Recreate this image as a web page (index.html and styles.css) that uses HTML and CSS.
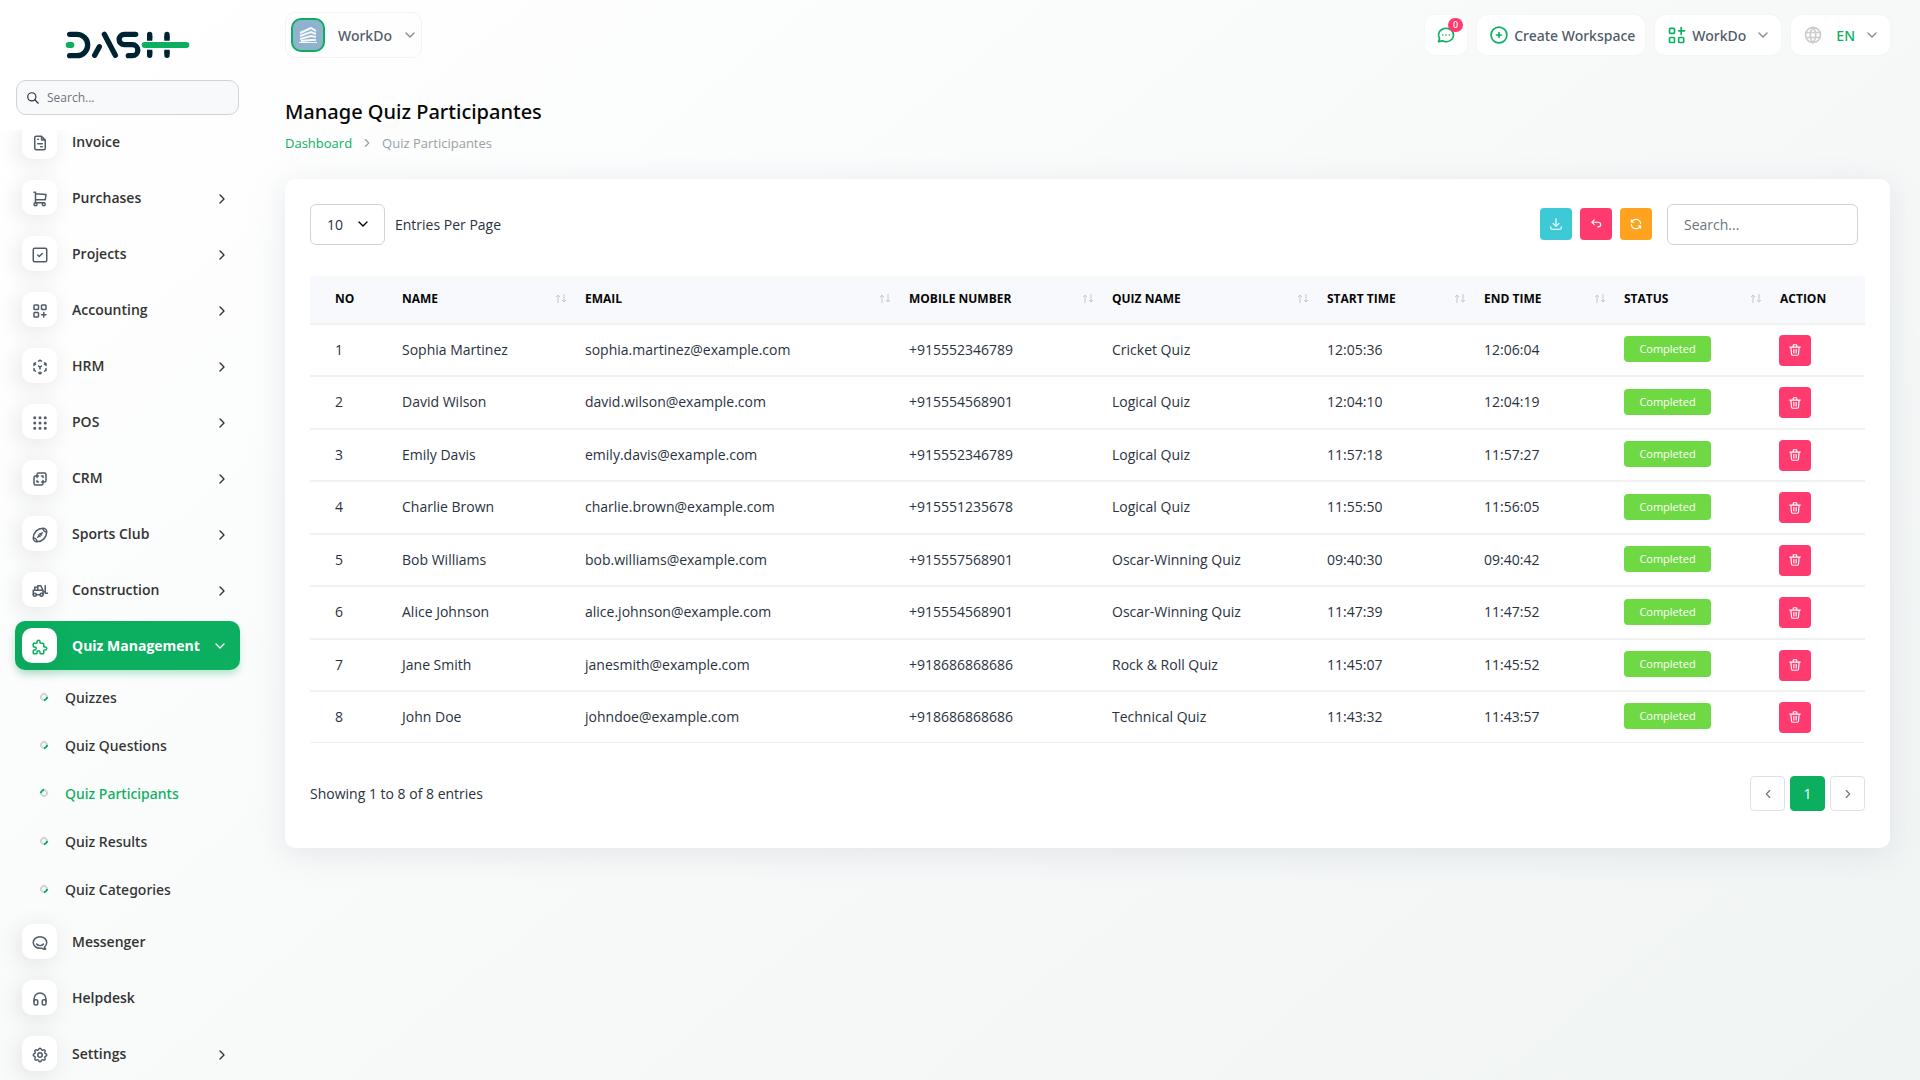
FILE: index.html
```html
<!DOCTYPE html>
<html lang="en">
<head>
    <meta charset="UTF-8">
    <meta name="viewport" content="width=device-width, initial-scale=1.0">
    <title>Manage Quiz Participantes</title>
    <link rel="stylesheet" href="styles.css">
</head>
<body>
    <!-- Icon set -->
    <svg class="sprite" aria-hidden="true">
        <symbol id="i-search" viewBox="0 0 24 24"><circle cx="10" cy="10" r="7"/><path d="M21 21l-6-6"/></symbol>
        <symbol id="i-right" viewBox="0 0 24 24"><path d="M9 6l6 6-6 6"/></symbol>
        <symbol id="i-left" viewBox="0 0 24 24"><path d="M15 6l-6 6 6 6"/></symbol>
        <symbol id="i-down" viewBox="0 0 24 24"><path d="M6 9l6 6 6-6"/></symbol>
        <symbol id="i-invoice" viewBox="0 0 24 24"><path d="M14 3v4a1 1 0 0 0 1 1h4M17 21H7a2 2 0 0 1-2-2V5a2 2 0 0 1 2-2h7l5 5v11a2 2 0 0 1-2 2zM9 7h1M9 13h6M13 17h2"/></symbol>
        <symbol id="i-cart" viewBox="0 0 24 24"><circle cx="6" cy="19" r="2"/><circle cx="17" cy="19" r="2"/><path d="M17 17H6V3H4M6 5l14 1-1 7H6"/></symbol>
        <symbol id="i-check" viewBox="0 0 24 24"><rect x="3" y="3" width="18" height="18" rx="2"/><path d="M9 12l2 2 4-4"/></symbol>
        <symbol id="i-grid-add" viewBox="0 0 24 24"><rect x="4" y="4" width="6" height="6" rx="1"/><rect x="14" y="4" width="6" height="6" rx="1"/><rect x="4" y="14" width="6" height="6" rx="1"/><path d="M14 17h6M17 14v6"/></symbol>
        <symbol id="i-cube" viewBox="0 0 24 24"><path d="M6 17.600l-2-1.100V14M4 10V7.500l2-1.100M10 4.100L12 3l2 1.100M18 6.400l2 1.100V10M20 14v2.500l-2 1.120M14 19.900L12 21l-2-1.100M12 12l2-1.100M18 8.600l2-1.100M12 12v2.500M12 18.500V21M12 12l-2-1.120M6 8.600L4 7.500"/></symbol>
        <symbol id="i-dots" viewBox="0 0 24 24"><circle cx="5" cy="5" r="1"/><circle cx="12" cy="5" r="1"/><circle cx="19" cy="5" r="1"/><circle cx="5" cy="12" r="1"/><circle cx="12" cy="12" r="1"/><circle cx="19" cy="12" r="1"/><circle cx="5" cy="19" r="1"/><circle cx="12" cy="19" r="1"/><circle cx="19" cy="19" r="1"/></symbol>
        <symbol id="i-layers" viewBox="0 0 24 24"><path d="M16 16v2a2 2 0 0 1-2 2H6a2 2 0 0 1-2-2v-8a2 2 0 0 1 2-2h2V6a2 2 0 0 1 2-2h8a2 2 0 0 1 2 2v8a2 2 0 0 1-2 2h-2M10 8H8v2M8 14v2h2M14 8h2v2M16 14v2h-2"/></symbol>
        <symbol id="i-ball" viewBox="0 0 24 24"><path d="M15 9l-6 6M10 12l2 2M12 10l2 2M8 21a5 5 0 0 0-5-5M16 3C8.820 3 3 8.820 3 16a5 5 0 0 0 5 5c7.180 0 13-5.820 13-13a5 5 0 0 0-5-5M16 3a5 5 0 0 0 5 5"/></symbol>
        <symbol id="i-forklift" viewBox="0 0 24 24"><circle cx="5" cy="17" r="2"/><circle cx="14" cy="17" r="2"/><path d="M7 17h5M3 17v-6h13v6M5 11V7h4M9 11V5h4l3 6M22 15h-3V5M16 13h3"/></symbol>
        <symbol id="i-puzzle" viewBox="0 0 24 24"><path d="M4 7h3a1 1 0 0 0 1-1V5a2 2 0 0 1 4 0v1a1 1 0 0 0 1 1h3a1 1 0 0 1 1 1v3a1 1 0 0 0 1 1h1a2 2 0 0 1 0 4h-1a1 1 0 0 0-1 1v3a1 1 0 0 1-1 1h-3a1 1 0 0 1-1-1v-1a2 2 0 0 0-4 0v1a1 1 0 0 1-1 1H4a1 1 0 0 1-1-1v-3a1 1 0 0 1 1-1h1a2 2 0 0 0 0-4H4a1 1 0 0 1-1-1V8a1 1 0 0 1 1-1"/></symbol>
        <symbol id="i-messenger" viewBox="0 0 24 24"><path d="M17.802 17.292s.077-.055.200-.149c1.843-1.425 3-3.490 3-5.789 0-4.286-4.030-7.764-9-7.764s-9 3.478-9 7.764C3.002 15.642 7.032 19 12.002 19c.424 0 1.120-.028 2.088-.084 1.262.820 3.104 1.493 4.716 1.493.499 0 .734-.410.414-.828-.486-.596-1.156-1.551-1.416-2.290zM7.500 13.500c2.500 2.500 6.500 2.500 9 0"/></symbol>
        <symbol id="i-headphones" viewBox="0 0 24 24"><rect x="4" y="13" width="5" height="7" rx="2"/><rect x="15" y="13" width="5" height="7" rx="2"/><path d="M4 15v-3a8 8 0 0 1 16 0v3"/></symbol>
        <symbol id="i-settings" viewBox="0 0 24 24"><path d="M10.325 4.317c.426-1.756 2.924-1.756 3.350 0a1.724 1.724 0 0 0 2.573 1.066c1.543-.940 3.310.826 2.370 2.370a1.724 1.724 0 0 0 1.065 2.572c1.756.426 1.756 2.924 0 3.350a1.724 1.724 0 0 0-1.066 2.573c.940 1.543-.826 3.310-2.370 2.370a1.724 1.724 0 0 0-2.572 1.065c-.426 1.756-2.924 1.756-3.350 0a1.724 1.724 0 0 0-2.573-1.066c-1.543.940-3.310-.826-2.370-2.370a1.724 1.724 0 0 0-1.065-2.572c-1.756-.426-1.756-2.924 0-3.350a1.724 1.724 0 0 0 1.066-2.573c-.940-1.543.826-3.310 2.370-2.370 1 .608 2.296.070 2.572-1.065z"/><circle cx="12" cy="12" r="3"/></symbol>
        <symbol id="i-message" viewBox="0 0 24 24"><path d="M3 20l1.300-3.900C1.976 12.663 2.874 8.228 6.400 5.726c3.526-2.501 8.590-2.296 11.845.480 3.255 2.777 3.695 7.266 1.029 10.501C16.608 19.942 11.659 20.922 7.700 19L3 20M8 12h.010M12 12h.010M16 12h.010"/></symbol>
        <symbol id="i-plus" viewBox="0 0 24 24"><circle cx="12" cy="12" r="9.500"/><path d="M9 12h6M12 9v6"/></symbol>
        <symbol id="i-apps" viewBox="0 0 24 24"><rect x="3" y="4" width="6" height="6" rx="1"/><rect x="3" y="15" width="6" height="6" rx="1"/><rect x="14" y="15" width="6" height="6" rx="1"/><path d="M14 7h7M17 3v8"/></symbol>
        <symbol id="i-world" viewBox="0 0 24 24"><circle cx="12" cy="12" r="9"/><path d="M3.600 9h16.800M3.600 15h16.800M11.500 3a17 17 0 0 0 0 18M12.500 3a17 17 0 0 1 0 18"/></symbol>
        <symbol id="i-download" viewBox="0 0 24 24"><path d="M3 17v2a2 2 0 0 0 2 2h14a2 2 0 0 0 2-2v-2M7 11l5 5 5-5M12 3v13"/></symbol>
        <symbol id="i-back" viewBox="0 0 24 24"><path d="M9 13L5 9l4-4M5 9h11a4 4 0 0 1 0 8h-1"/></symbol>
        <symbol id="i-refresh" viewBox="0 0 24 24"><path d="M20 11A8.100 8.100 0 0 0 4.500 9M4 5v4h4M4 13a8.100 8.100 0 0 0 15.500 2M20 19v-4h-4"/></symbol>
        <symbol id="i-trash" viewBox="0 0 24 24"><path d="M3 7h18M10 11v6M14 11v6M5 7l1 12a2 2 0 0 0 2 2h8a2 2 0 0 0 2-2l1-12M9 7V4a1 1 0 0 1 1-1h4a1 1 0 0 1 1 1v3"/></symbol>
        <symbol id="i-sort" viewBox="0 0 10 9"><path d="M2 9V1M0 3l2-2 2 2M8 0v8M6 6l2 2 2-2"/></symbol>
    </svg>

    <div class="layout">
        <aside class="sidebar">
            <a class="logo" href="#" aria-label="Dash">
                <svg viewBox="195 93 375 84" width="125" height="28">
                    <g class="logo-dark">
                        <path d="M209 103h22a32 32 0 0 1 0 64h-22M298 140l-14 26M313 103l33 63M407 103h-34a15 15 0 0 0 0 31h24a16 16 0 0 1 0 33h-12"/>
                        <path d="M449 103v9M449 158v8M501 103v9M501 158v8"/>
                        <path class="flat" d="M449 108v14M449 149v12M501 108v14M501 149v12"/>
                    </g>
                    <g class="logo-green">
                        <rect x="197" y="126" width="26" height="18" rx="9"/>
                        <rect x="425" y="126" width="143" height="18" rx="9"/>
                    </g>
                </svg>
            </a>
            <label class="side-search">
                <svg class="icon"><use href="#i-search"/></svg>
                <input type="search" placeholder="Search..." aria-label="Search menu">
            </label>
            <nav class="menu">
                <ul class="menu-list">
                    <li><a class="item" href="#"><span class="item-icon"><svg class="icon"><use href="#i-invoice"/></svg></span>Invoice</a></li>
                    <li><a class="item" href="#"><span class="item-icon"><svg class="icon"><use href="#i-cart"/></svg></span>Purchases<svg class="icon arrow"><use href="#i-right"/></svg></a></li>
                    <li><a class="item" href="#"><span class="item-icon"><svg class="icon"><use href="#i-check"/></svg></span>Projects<svg class="icon arrow"><use href="#i-right"/></svg></a></li>
                    <li><a class="item" href="#"><span class="item-icon"><svg class="icon"><use href="#i-grid-add"/></svg></span>Accounting<svg class="icon arrow"><use href="#i-right"/></svg></a></li>
                    <li><a class="item" href="#"><span class="item-icon"><svg class="icon"><use href="#i-cube"/></svg></span>HRM<svg class="icon arrow"><use href="#i-right"/></svg></a></li>
                    <li><a class="item" href="#"><span class="item-icon"><svg class="icon"><use href="#i-dots"/></svg></span>POS<svg class="icon arrow"><use href="#i-right"/></svg></a></li>
                    <li><a class="item" href="#"><span class="item-icon"><svg class="icon"><use href="#i-layers"/></svg></span>CRM<svg class="icon arrow"><use href="#i-right"/></svg></a></li>
                    <li><a class="item" href="#"><span class="item-icon"><svg class="icon"><use href="#i-ball"/></svg></span>Sports Club<svg class="icon arrow"><use href="#i-right"/></svg></a></li>
                    <li><a class="item" href="#"><span class="item-icon"><svg class="icon"><use href="#i-forklift"/></svg></span>Construction<svg class="icon arrow"><use href="#i-right"/></svg></a></li>
                    <li>
                        <a class="item active" href="#"><span class="item-icon"><svg class="icon"><use href="#i-puzzle"/></svg></span>Quiz Management<svg class="icon arrow"><use href="#i-down"/></svg></a>
                        <ul class="submenu">
                            <li><a href="#">Quizzes</a></li>
                            <li><a href="#">Quiz Questions</a></li>
                            <li><a class="current" href="#">Quiz Participants</a></li>
                            <li><a href="#">Quiz Results</a></li>
                            <li><a href="#">Quiz Categories</a></li>
                        </ul>
                    </li>
                    <li><a class="item" href="#"><span class="item-icon"><svg class="icon"><use href="#i-messenger"/></svg></span>Messenger</a></li>
                    <li><a class="item" href="#"><span class="item-icon"><svg class="icon"><use href="#i-headphones"/></svg></span>Helpdesk</a></li>
                    <li><a class="item" href="#"><span class="item-icon"><svg class="icon"><use href="#i-settings"/></svg></span>Settings<svg class="icon arrow"><use href="#i-right"/></svg></a></li>
                </ul>
            </nav>
        </aside>

        <div class="content">
            <header class="topbar">
                <button type="button" class="workspace">
                    <span class="avatar">
                        <svg viewBox="0 0 18 16" width="18" height="16">
                            <path d="M1 6l11-5 5 3M1 9l11-4 5 2M1 12l11-3 5 1M2 14l10-1h5M0 16h18"/>
                        </svg>
                    </span>
                    WorkDo
                    <svg class="icon caret"><use href="#i-down"/></svg>
                </button>
                <div class="top-actions">
                    <button type="button" class="top-btn messages" aria-label="Messages"><svg class="icon"><use href="#i-message"/></svg><span class="count">0</span></button>
                    <button type="button" class="top-btn"><svg class="icon"><use href="#i-plus"/></svg>Create Workspace</button>
                    <button type="button" class="top-btn"><svg class="icon"><use href="#i-apps"/></svg>WorkDo<svg class="icon caret"><use href="#i-down"/></svg></button>
                    <button type="button" class="top-btn lang"><svg class="icon"><use href="#i-world"/></svg><span>EN</span><svg class="icon caret"><use href="#i-down"/></svg></button>
                </div>
            </header>

            <main>
                <h1>Manage Quiz Participantes</h1>
                <nav class="breadcrumb" aria-label="Breadcrumb">
                    <a href="#">Dashboard</a>
                    <svg class="icon"><use href="#i-right"/></svg>
                    <span>Quiz Participantes</span>
                </nav>

                <section class="card">
                    <div class="toolbar">
                        <div class="per-page">
                            <div class="select-wrap">
                                <select id="perPage">
                                    <option>10</option>
                                    <option>25</option>
                                    <option>50</option>
                                </select>
                                <svg class="icon"><use href="#i-down"/></svg>
                            </div>
                            <label for="perPage">Entries Per Page</label>
                        </div>
                        <div class="tools">
                            <button type="button" class="btn info" aria-label="Export"><svg class="icon"><use href="#i-download"/></svg></button>
                            <button type="button" class="btn danger" aria-label="Reset"><svg class="icon"><use href="#i-back"/></svg></button>
                            <button type="button" class="btn warning" aria-label="Reload"><svg class="icon"><use href="#i-refresh"/></svg></button>
                            <input type="search" class="table-search" placeholder="Search..." aria-label="Search table">
                        </div>
                    </div>

                    <table>
                        <colgroup>
                            <col class="c-no">
                            <col class="c-name">
                            <col class="c-email">
                            <col class="c-mobile">
                            <col class="c-quiz">
                            <col class="c-start">
                            <col class="c-end">
                            <col class="c-status">
                            <col class="c-action">
                        </colgroup>
                        <thead>
                            <tr>
                                <th>No</th>
                                <th><div class="sortable">Name<svg class="sort"><use href="#i-sort"/></svg></div></th>
                                <th><div class="sortable">Email<svg class="sort"><use href="#i-sort"/></svg></div></th>
                                <th><div class="sortable">Mobile Number<svg class="sort"><use href="#i-sort"/></svg></div></th>
                                <th><div class="sortable">Quiz Name<svg class="sort"><use href="#i-sort"/></svg></div></th>
                                <th><div class="sortable">Start Time<svg class="sort"><use href="#i-sort"/></svg></div></th>
                                <th><div class="sortable">End Time<svg class="sort"><use href="#i-sort"/></svg></div></th>
                                <th><div class="sortable">Status<svg class="sort"><use href="#i-sort"/></svg></div></th>
                                <th>Action</th>
                            </tr>
                        </thead>
                        <tbody>
                            <tr>
                                <td>1</td><td>Sophia Martinez</td><td>sophia.martinez@example.com</td><td>+915552346789</td><td>Cricket Quiz</td><td>12:05:36</td><td>12:06:04</td>
                                <td><span class="badge">Completed</span></td>
                                <td><button type="button" class="btn danger" aria-label="Delete"><svg class="icon"><use href="#i-trash"/></svg></button></td>
                            </tr>
                            <tr>
                                <td>2</td><td>David Wilson</td><td>david.wilson@example.com</td><td>+915554568901</td><td>Logical Quiz</td><td>12:04:10</td><td>12:04:19</td>
                                <td><span class="badge">Completed</span></td>
                                <td><button type="button" class="btn danger" aria-label="Delete"><svg class="icon"><use href="#i-trash"/></svg></button></td>
                            </tr>
                            <tr>
                                <td>3</td><td>Emily Davis</td><td>emily.davis@example.com</td><td>+915552346789</td><td>Logical Quiz</td><td>11:57:18</td><td>11:57:27</td>
                                <td><span class="badge">Completed</span></td>
                                <td><button type="button" class="btn danger" aria-label="Delete"><svg class="icon"><use href="#i-trash"/></svg></button></td>
                            </tr>
                            <tr>
                                <td>4</td><td>Charlie Brown</td><td>charlie.brown@example.com</td><td>+915551235678</td><td>Logical Quiz</td><td>11:55:50</td><td>11:56:05</td>
                                <td><span class="badge">Completed</span></td>
                                <td><button type="button" class="btn danger" aria-label="Delete"><svg class="icon"><use href="#i-trash"/></svg></button></td>
                            </tr>
                            <tr>
                                <td>5</td><td>Bob Williams</td><td>bob.williams@example.com</td><td>+915557568901</td><td>Oscar-Winning Quiz</td><td>09:40:30</td><td>09:40:42</td>
                                <td><span class="badge">Completed</span></td>
                                <td><button type="button" class="btn danger" aria-label="Delete"><svg class="icon"><use href="#i-trash"/></svg></button></td>
                            </tr>
                            <tr>
                                <td>6</td><td>Alice Johnson</td><td>alice.johnson@example.com</td><td>+915554568901</td><td>Oscar-Winning Quiz</td><td>11:47:39</td><td>11:47:52</td>
                                <td><span class="badge">Completed</span></td>
                                <td><button type="button" class="btn danger" aria-label="Delete"><svg class="icon"><use href="#i-trash"/></svg></button></td>
                            </tr>
                            <tr>
                                <td>7</td><td>Jane Smith</td><td>janesmith@example.com</td><td>+918686868686</td><td>Rock &amp; Roll Quiz</td><td>11:45:07</td><td>11:45:52</td>
                                <td><span class="badge">Completed</span></td>
                                <td><button type="button" class="btn danger" aria-label="Delete"><svg class="icon"><use href="#i-trash"/></svg></button></td>
                            </tr>
                            <tr>
                                <td>8</td><td>John Doe</td><td>johndoe@example.com</td><td>+918686868686</td><td>Technical Quiz</td><td>11:43:32</td><td>11:43:57</td>
                                <td><span class="badge">Completed</span></td>
                                <td><button type="button" class="btn danger" aria-label="Delete"><svg class="icon"><use href="#i-trash"/></svg></button></td>
                            </tr>
                        </tbody>
                    </table>

                    <div class="table-footer">
                        <p>Showing 1 to 8 of 8 entries</p>
                        <div class="pagination">
                            <button type="button" aria-label="Previous"><svg class="icon"><use href="#i-left"/></svg></button>
                            <button type="button" class="active">1</button>
                            <button type="button" aria-label="Next"><svg class="icon"><use href="#i-right"/></svg></button>
                        </div>
                    </div>
                </section>
            </main>
        </div>
    </div>
</body>
</html>
```
FILE: styles.css
```css
*,
*::before {
    box-sizing: border-box;
}

body {
    margin: 0;
    min-height: 100vh;
    font-family: "Open Sans", "Liberation Sans", sans-serif;
    font-size: 14px;
    line-height: 21px;
    color: #293240;
    background: linear-gradient(141deg, rgba(240, 244, 243, 0) 3%, #f0f4f3 100%) #ffffff;
}

a {
    color: inherit;
    text-decoration: none;
}

ul {
    list-style: none;
    margin: 0;
    padding: 0;
}

button,
input,
select {
    font: inherit;
    color: inherit;
}

button {
    padding: 0;
    border: none;
    cursor: pointer;
}

.sprite {
    position: absolute;
    width: 0;
    height: 0;
}

.icon {
    width: 18px;
    height: 18px;
    flex-shrink: 0;
    fill: none;
    stroke: currentColor;
    stroke-width: 2;
    stroke-linecap: round;
    stroke-linejoin: round;
}

.layout {
    display: flex;
    min-height: 100vh;
}

/* Sidebar */
.sidebar {
    display: flex;
    flex-direction: column;
    width: 255px;
    height: 100vh;
    flex-shrink: 0;
}

.logo {
    display: block;
    height: 80px;
    padding: 31px 0 0 65px;
}

.logo svg {
    display: block;
}

.logo-dark {
    fill: none;
    stroke: #002333;
    stroke-width: 16;
    stroke-linecap: round;
}

.logo-dark .flat {
    stroke-linecap: butt;
}

.logo-green {
    fill: #0caf60;
}

.side-search {
    display: flex;
    align-items: center;
    gap: 7px;
    height: 35px;
    margin: 0 16px 15px;
    padding: 0 9px;
    border: 1px solid #ced4da;
    border-radius: 10px;
    background: #f8f9fa;
}

.side-search .icon {
    width: 14px;
    height: 14px;
}

.side-search input {
    width: 100%;
    padding: 0;
    border: none;
    outline: none;
    background: none;
    font-size: 12px;
}

input::placeholder {
    color: #6c757d;
    opacity: 1;
}

.menu {
    flex: 1;
    min-height: 0;
    padding: 0 15px;
    overflow: hidden;
}

.menu-list {
    display: flex;
    flex-direction: column;
    gap: 7px;
    margin-top: -13px;
}

.item {
    display: flex;
    align-items: center;
    height: 49px;
    padding: 0 10px 0 7px;
    border-radius: 10px;
    font-weight: 600;
    color: #333333;
}

.item-icon {
    display: flex;
    align-items: center;
    justify-content: center;
    width: 35px;
    height: 35px;
    margin-right: 15px;
    padding-top: 2px;
    border-radius: 10px;
    background: #ffffff;
    color: #525b69;
    box-shadow: -3px 4px 23px rgba(0, 0, 0, 0.1);
}

.item .arrow {
    width: 16px;
    height: 16px;
    margin: 2px 0 0 auto;
}

.item.active {
    font-weight: 700;
    color: #ffffff;
    background: #0caf60;
    box-shadow: 0 5px 7px -1px rgba(12, 175, 96, 0.3);
}

.item.active .item-icon {
    color: #0caf60;
}

.item.active .arrow {
    margin: 0 2px 0 auto;
}

.submenu {
    padding-top: 3px;
    margin-bottom: -3px;
}

.submenu a {
    display: flex;
    align-items: center;
    gap: 17px;
    height: 48px;
    padding-left: 25px;
    font-family: "Noto Sans", "Open Sans", sans-serif;
    font-weight: 500;
    color: #333333;
}

.submenu a::before {
    content: "";
    width: 8px;
    height: 8px;
    border: 2px solid #ced4da;
    border-right-color: #0caf60;
    border-radius: 50%;
    transform: rotate(45deg);
}

.submenu a.current {
    color: #0caf60;
}

.submenu a.current::before {
    transform: rotate(225deg);
}

/* Top bar */
.content {
    flex: 1;
    min-width: 0;
    padding: 12px 30px 30px;
}

.topbar {
    display: flex;
    align-items: center;
    justify-content: space-between;
    font-family: "Noto Sans", "Open Sans", sans-serif;
    font-weight: 500;
    color: #525b69;
}

.workspace {
    display: flex;
    align-items: center;
    height: 46px;
    padding: 0 3px 0 5px;
    border: 1px solid #f1f3f4;
    border-radius: 10px;
    background: none;
}

.avatar {
    display: flex;
    align-items: center;
    justify-content: center;
    width: 34px;
    height: 34px;
    margin-right: 13px;
    border: 2px solid #0caf60;
    border-radius: 10px;
    background: #8fb2cf;
}

.avatar svg {
    fill: none;
    stroke: #f4f8fb;
    stroke-width: 2;
}

.workspace .caret {
    width: 16px;
    height: 16px;
    margin-left: 10px;
    opacity: 0.7;
}

.top-actions {
    display: flex;
    gap: 10px;
}

.top-btn {
    position: relative;
    display: flex;
    align-items: center;
    gap: 5px;
    height: 40px;
    padding: 0 10px 0 12px;
    border-radius: 10px;
    background: #ffffff;
    box-shadow: 0 0 2px rgba(0, 0, 0, 0.05);
}

.top-btn.messages {
    padding: 0 11px;
}

.top-btn .icon {
    width: 20px;
    height: 20px;
    color: #0caf60;
}

.top-btn .icon.caret {
    width: 16px;
    height: 16px;
    margin-left: 4px;
    color: #525b69;
    opacity: 0.7;
}

.count {
    position: absolute;
    top: 3px;
    right: 4px;
    width: 15px;
    height: 14px;
    border-radius: 7px;
    background: #ff3a6e;
    color: #ffffff;
    font-size: 9px;
    line-height: 14px;
}

.top-btn.lang {
    color: #0caf60;
}

.top-btn.lang .icon:first-child {
    margin-right: 8px;
    color: #cccccc;
}

/* Page title */
h1 {
    margin: 39px 0 0;
    font-family: "Noto Sans", "Open Sans", sans-serif;
    font-size: 20px;
    line-height: 30px;
    font-weight: 500;
    color: #060606;
}

.breadcrumb {
    display: flex;
    align-items: center;
    gap: 8px;
    margin: 6px 0 26px;
    font-size: 13px;
    line-height: 20px;
    color: #999fa6;
}

.breadcrumb a {
    color: #0caf60;
}

.breadcrumb .icon {
    width: 14px;
    height: 14px;
}

/* Card */
.card {
    padding: 25px 25px 37px;
    border-radius: 10px;
    background: #ffffff;
    box-shadow: 0 6px 30px rgba(182, 186, 203, 0.3);
}

.toolbar,
.per-page,
.tools {
    display: flex;
    align-items: center;
}

.toolbar {
    justify-content: space-between;
    margin-bottom: 31px;
    padding-right: 7px;
}

.per-page {
    gap: 10px;
}

.select-wrap {
    position: relative;
}

.select-wrap select {
    display: block;
    width: 75px;
    height: 41px;
    padding: 0 16px;
    border: 1px solid #ced4da;
    border-radius: 6px;
    background: #ffffff;
    appearance: none;
}

.select-wrap .icon {
    position: absolute;
    top: 12px;
    right: 14px;
    width: 16px;
    height: 16px;
    color: #000000;
    pointer-events: none;
}

.tools {
    gap: 8px;
}

.btn {
    display: flex;
    align-items: center;
    justify-content: center;
    width: 32px;
    height: 32px;
    border-radius: 4px;
    color: #ffffff;
}

.tools .btn {
    margin-bottom: 1px;
}

.btn .icon {
    width: 14px;
    height: 14px;
}

.info {
    background: #3ec9d6;
}

.danger {
    background: #ff3a6e;
}

.warning {
    background: #ffa21d;
}

.table-search {
    width: 191px;
    height: 41px;
    margin-left: 7px;
    padding: 0 16px;
    border: 1px solid #ced4da;
    border-radius: 6px;
    background: #ffffff;
}

/* Table */
table {
    width: 100%;
    table-layout: fixed;
    border-spacing: 0;
}

.c-no { width: 82px; }
.c-name { width: 183px; }
.c-email { width: 324px; }
.c-mobile { width: 203px; }
.c-quiz { width: 215px; }
.c-start { width: 157px; }
.c-end { width: 140px; }
.c-status { width: 156px; }
.c-action { width: 95px; }

th {
    height: 49px;
    padding: 0 9px 2px 10px;
    border-bottom: 2px solid #f1f1f1;
    background: #f8f9fd;
    font-size: 12px;
    font-weight: 700;
    text-align: left;
    text-transform: uppercase;
    color: #060606;
}

.sortable {
    display: flex;
    align-items: center;
    justify-content: space-between;
}

.sort {
    width: 10px;
    height: 9px;
    fill: none;
    stroke: #c4c6ca;
}

td {
    height: 52px;
    padding: 0 9px 2px 10px;
    border-bottom: 2px solid #f1f1f1;
}

tr:nth-child(even) td {
    height: 53px;
}

tbody tr:last-child td {
    height: 51px;
    border-bottom-width: 1px;
}

th:first-child,
td:first-child {
    padding-left: 25px;
}

td:last-child {
    padding: 0 9px;
}

td .btn {
    height: 31px;
}

.badge {
    display: block;
    width: 87px;
    height: 26px;
    border-radius: 4px;
    background: #6fd943;
    color: #ffffff;
    font-size: 11px;
    line-height: 26px;
    text-align: center;
}

.table-footer {
    display: flex;
    align-items: center;
    justify-content: space-between;
    margin-top: 33px;
}

.table-footer p {
    margin: 0;
}

.pagination {
    display: flex;
    gap: 5px;
}

.pagination button {
    display: flex;
    align-items: center;
    justify-content: center;
    width: 35px;
    height: 35px;
    border: 1px solid #dee2e6;
    border-radius: 4px;
    background: #ffffff;
    color: #6c757d;
}

.pagination .icon {
    width: 14px;
    height: 14px;
}

.pagination .active {
    border-color: #0caf60;
    background: #0caf60;
    color: #ffffff;
}
```
